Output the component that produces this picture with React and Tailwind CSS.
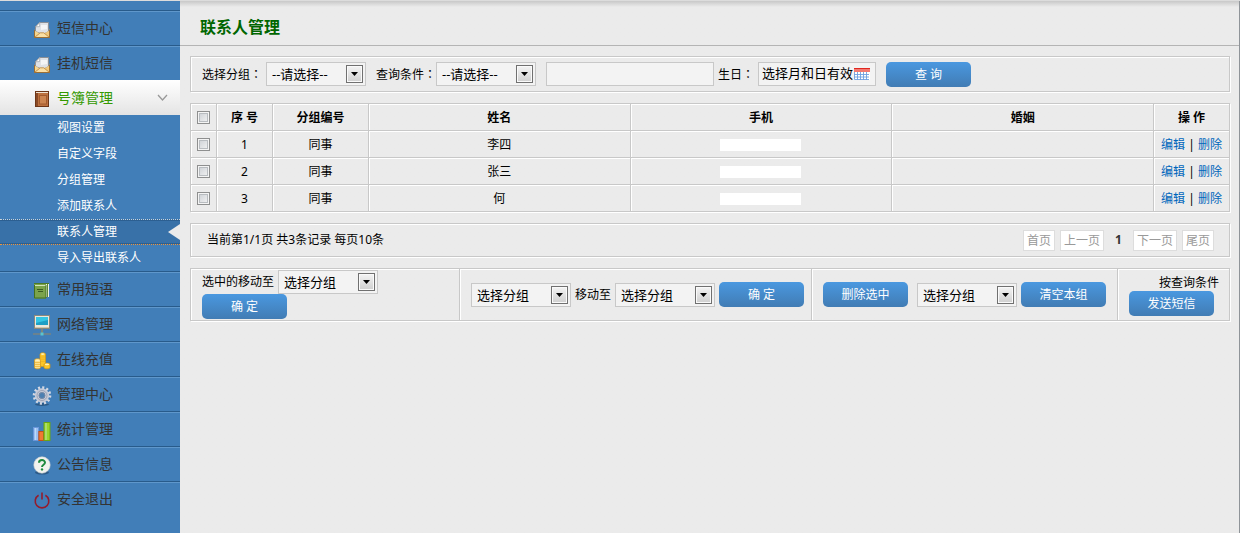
import React, { useState } from 'react';

const MailIcon = () => (
  <svg width="18" height="18" viewBox="0 0 18 18">
    <path d="M1.5 9 L3 7 H16 L16.5 9 V16 H1.5 Z" fill="#d9a552" />
    <path d="M6.5 1.5 H15.5 V10.5 L10 13.5 L2.5 10.5 V5.5 Z" fill="#dfe2e6" stroke="#8a8f96" />
    <path d="M6.8 1.6 L6.6 5.6 L2.8 5.8 Z" fill="#fff" stroke="#9aa0a6" strokeWidth="0.7" />
    <path d="M8 4 H14 V8 L8 9 Z" fill="#f4f5f6" />
    <path d="M1.3 9.5 L7 12.5 L1.3 16.5 Z" fill="#f5d792" />
    <path d="M16.7 9.5 L11 12.5 L16.7 16.5 Z" fill="#f0c97c" />
    <path d="M1.5 16.5 L7.2 11.8 H10.8 L16.5 16.5 Z" fill="#f9dfa4" stroke="#b98238" strokeWidth="0.8" />
    <path d="M1.5 9 V16.5 H16.5 V9" fill="none" stroke="#9b6f35" />
  </svg>
);

const BookIcon = () => (
  <svg width="18" height="18" viewBox="0 0 18 18">
    <rect x="2.5" y="1.5" width="13" height="15" fill="#bd713f" stroke="#6d3517" />
    <rect x="3" y="2" width="2" height="14" fill="#8a4a26" />
    <path d="M3 2.5 H15" stroke="#efe2d2" />
    <rect x="6.5" y="5.5" width="7" height="8.5" fill="#cc8450" stroke="#a25a2e" />
  </svg>
);

const PhraseIcon = () => (
  <svg width="18" height="18" viewBox="0 0 18 18">
    <rect x="3" y="1" width="13" height="14" fill="#eef4e4" />
    <path d="M1 1.5 H16" stroke="#4d7a26" />
    <path d="M14.5 2 V15" stroke="#5d8a34" />
    <rect x="1" y="2" width="12" height="14.5" fill="#7ba44b" />
    <path d="M1 3.5 H13" stroke="#d3e4bb" />
    <path d="M1.5 3 V16 H13 V3" fill="none" stroke="#44701f" />
    <path d="M4 7.5 H10 M5 9.5 H10" stroke="#3b5c21" />
  </svg>
);

const NetworkIcon = () => (
  <svg width="18" height="21" viewBox="0 0 18 21">
    <rect x="1.5" y="0.5" width="15" height="13" fill="#ece8dc" stroke="#8c887c" />
    <rect x="3" y="2" width="12" height="8" fill="#1f9fc4" />
    <path d="M3 2 H15 V5 L3 8 Z" fill="#34c6e4" />
    <path d="M2 12.5 H16" stroke="#d0c6a8" />
    <path d="M9 14 V18" stroke="#7d857d" strokeWidth="2" />
    <path d="M0 19 H18" stroke="#7d857d" strokeWidth="1.4" />
    <rect x="7.5" y="17.5" width="3" height="3" fill="#59c4cf" />
  </svg>
);

const CoinsIcon = () => (
  <svg width="18" height="18" viewBox="0 0 18 18">
    <g fill="#fbc62a" stroke="#d9960e" strokeWidth="0.7">
      <path d="M7 2.2 C7 0.4 12.5 0.4 12.5 2.2 V13 C12.5 15 7 15 7 13 Z" />
      <path d="M1.5 8.2 C1.5 6.4 7.5 6.4 7.5 8.2 V15.5 C7.5 17.3 1.5 17.3 1.5 15.5 Z" fill="#fde08a" />
      <path d="M11 12.5 C11 10.8 17 10.8 17 12.5 V15.5 C17 17.3 11 17.3 11 15.5 Z" />
    </g>
    <g fill="#fff3bd">
      <ellipse cx="9.7" cy="2.1" rx="2" ry="0.8" />
      <ellipse cx="4.5" cy="8.2" rx="2.2" ry="0.8" />
      <ellipse cx="14" cy="12.4" rx="2.2" ry="0.8" />
    </g>
    <path d="M2 10.5 H7 M2 12.5 H7 M2 14.5 H7 M7.5 5 H12 M7.5 7.2 H12 M8 9.4 H12" stroke="#e8a91c" strokeWidth="0.6" />
  </svg>
);

const GearIcon = () => (
  <svg width="20" height="20" viewBox="0 0 20 20">
    <ellipse cx="10" cy="18.5" rx="7" ry="1.4" fill="#2c5a87" />
    <circle cx="10" cy="9.5" r="7.8" fill="none" stroke="#d5d9e4" strokeWidth="3" strokeDasharray="2 2.08" />
    <circle cx="10" cy="9.5" r="5.2" fill="none" stroke="#c5cad8" strokeWidth="4" />
    <circle cx="10" cy="9.5" r="5" fill="none" stroke="#9299ad" strokeWidth="0.8" />
    <circle cx="10" cy="9.5" r="3" fill="#4b7fb2" stroke="#858ca0" strokeWidth="0.8" />
  </svg>
);

const ChartIcon = () => (
  <svg width="18" height="20" viewBox="0 0 18 20">
    <rect x="0.5" y="6.5" width="5" height="13" fill="#9cc0f2" stroke="#6a97da" />
    <rect x="5.9" y="10.5" width="4.6" height="9" fill="#ef7a33" stroke="#c4511a" />
    <rect x="11" y="1.5" width="6" height="18" fill="#9ad62c" stroke="#6aa514" />
    <path d="M2.5 7 V19 M13 2 V19" stroke="#d3ecff" strokeOpacity="0.6" />
  </svg>
);

const HelpIcon = () => (
  <svg width="18" height="19" viewBox="0 0 18 19">
    <ellipse cx="9" cy="16.5" rx="7" ry="2" fill="#2c5a87" />
    <circle cx="9" cy="9" r="8.2" fill="#f1f2ee" stroke="#d0d4d0" strokeWidth="0.6" />
    <path d="M6 6.8 C6 3.2 12 3.2 12 6.6 C12 8.8 9 8.8 9 11" fill="none" stroke="#1f8a3f" strokeWidth="2" />
    <circle cx="9" cy="13.4" r="1.2" fill="#1f8a3f" />
  </svg>
);

const PowerIcon = () => (
  <svg width="18" height="18" viewBox="0 0 18 18">
    <path d="M5.6 3.2 A6.8 6.8 0 1 0 12.4 3.2" fill="none" stroke="#951c2c" strokeWidth="1.6" />
    <path d="M9 0.5 V7.5" stroke="#951c2c" strokeWidth="1.6" />
  </svg>
);

const CalendarIcon = () => (
  <svg width="16" height="12" viewBox="0 0 16 12">
    <rect width="16" height="11" y="1" fill="#fff" />
    <rect width="16" height="4" fill="#f27a72" />
    <path d="M0 0.5 H16" stroke="#e0271f" />
    <path d="M0.5 4 V11.5 H15 M3.5 4 V12 M6.5 4 V12 M9.5 4 V12 M12.5 4 V12 M0 6.5 H15 M0 9 H15" fill="none" stroke="#6f9fe0" strokeWidth="0.9" />
  </svg>
);

const menu = [
  { name: '短信中心', icon: <MailIcon /> },
  { name: '挂机短信', icon: <MailIcon /> },
  {
    name: '号簿管理',
    icon: <BookIcon />,
    children: ['视图设置', '自定义字段', '分组管理', '添加联系人', '联系人管理', '导入导出联系人'],
  },
  { name: '常用短语', icon: <PhraseIcon /> },
  { name: '网络管理', icon: <NetworkIcon /> },
  { name: '在线充值', icon: <CoinsIcon /> },
  { name: '管理中心', icon: <GearIcon /> },
  { name: '统计管理', icon: <ChartIcon /> },
  { name: '公告信息', icon: <HelpIcon /> },
  { name: '安全退出', icon: <PowerIcon /> },
];

const contacts = [
  { id: 1, group: '同事', name: '李四' },
  { id: 2, group: '同事', name: '张三' },
  { id: 3, group: '同事', name: '何' },
];

const panel = 'border border-[#c8c8c8] shadow-[inset_1px_1px_0_#fff,1px_1px_0_#fff]';
const cell = 'h-[27px] p-0 pt-px border-l border-t border-[#c8c8c8] shadow-[inset_1px_1px_0_#fff]';

// the SC font sets its full-width colon to the left, TC centres it
const Colon = () => <span className="font-['Noto_Sans_CJK_TC',sans-serif]">：</span>;

const Select = ({ label, option }) => (
  <span className="relative inline-block h-6 w-[100px] shrink-0">
    <select
      aria-label={label}
      className="h-6 w-full appearance-none border border-[#c8c8c8] bg-[#f3f3f3] pl-[5px] text-[13px] leading-[22px] text-black"
    >
      <option>{option}</option>
    </select>
    <span className="pointer-events-none absolute right-[3px] top-[3px] flex h-[18px] w-[17px] items-center justify-center border border-[#707070] bg-linear-to-b from-[#f4f4f4] to-[#cfcfcf] shadow-[inset_0_0_0_1px_#fafafa]">
      <svg width="7" height="4" viewBox="0 0 7 4">
        <path d="M0 0 H7 L3.5 4 Z" fill="#000" />
      </svg>
    </span>
  </span>
);

const Button = ({ children }) => (
  <button
    type="button"
    className="h-[25px] w-[85px] shrink-0 rounded-[5px] bg-linear-to-b from-[#4a98e0] to-[#417cb4] text-center text-[12px] leading-[25px] text-white"
  >
    {children}
  </button>
);

const Checkbox = ({ label, checked, onChange }) => (
  <input
    type="checkbox"
    aria-label={label}
    checked={checked}
    onChange={onChange}
    className="mx-auto block size-[13px] appearance-none border border-[#8e8f8f] bg-linear-to-br from-[#c9cdd2] to-[#f6f6f6] shadow-[inset_0_0_0_1px_#f4f4f4,inset_0_0_0_2px_#b8bcc0] checked:bg-[#417eb8]"
  />
);

const Sidebar = () => (
  <aside className="w-[180px] shrink-0 bg-[#417eb8] pt-[9px]">
    <ul>
      {menu.map((item) => (
        <li key={item.name}>
          <a
            href="#"
            className={`flex h-[35px] items-center text-[14px] leading-[20px] ${
              item.children
                ? 'bg-linear-to-b from-white to-[#e4e4e4] text-[#339900]'
                : 'border-t border-[#285b8b] text-[#333] shadow-[inset_0_1px_0_#5f97cb]'
            }`}
          >
            <span className="ml-[31px] flex w-[22px] shrink-0 justify-center pt-[3px]">{item.icon}</span>
            <span className="ml-1 flex-1">{item.name}</span>
            {item.children && (
              <svg className="mr-3" width="11" height="8" viewBox="0 0 11 8">
                <path d="M1 1 L5.5 6 L10 1" fill="none" stroke="#999" strokeWidth="1.3" />
              </svg>
            )}
          </a>
          {item.children && (
            <ul>
              {item.children.map((child) => (
                <li key={child}>
                  <a
                    href="#"
                    className={`flex h-[26px] items-center justify-between pl-[57px] text-[12px] leading-[24px] text-white ${
                      child === '联系人管理'
                        ? 'border-y border-dotted border-t-[#c9d3da] border-b-[#f0953a] bg-[#3871a8] shadow-[inset_0_1px_0_#2c5f91,inset_0_-1px_0_#2c5f91]'
                        : ''
                    }`}
                  >
                    {child}
                    {child === '联系人管理' && (
                      <svg width="12" height="16" viewBox="0 0 12 16">
                        <path d="M12 0 V16 L0 8 Z" fill="#ebebeb" />
                      </svg>
                    )}
                  </a>
                </li>
              ))}
            </ul>
          )}
        </li>
      ))}
    </ul>
  </aside>
);

const Filters = () => (
  <form className={`flex h-9 items-center whitespace-nowrap pl-[11px] ${panel}`}>
    <span className="w-16 shrink-0">选择分组<Colon /></span>
    <Select label="选择分组" option="--请选择--" />
    <span className="ml-[10px] w-[60px] shrink-0">查询条件<Colon /></span>
    <Select label="查询条件" option="--请选择--" />
    <input
      type="text"
      aria-label="查询内容"
      className="ml-[10px] h-6 w-[168px] shrink-0 border border-[#c8c8c8] bg-[#f3f3f3] px-1 text-[13px]"
    />
    <label htmlFor="birthday" className="ml-1 w-10 shrink-0">
      生日<Colon />
    </label>
    <span className="flex h-6 w-[118px] shrink-0 items-center border border-[#c8c8c8] bg-[#f3f3f3] pl-[3px]">
      <input
        id="birthday"
        type="text"
        defaultValue="选择月和日有效"
        className="h-[22px] w-[92px] pb-1 text-[13px] leading-[18px] text-black outline-none"
      />
      <CalendarIcon />
    </span>
    <span className="ml-[10px] flex">
      <Button>查 询</Button>
    </span>
  </form>
);

const ContactTable = () => {
  const [selected, setSelected] = useState([]);
  const allSelected = selected.length === contacts.length;

  const toggle = (id) =>
    setSelected(selected.includes(id) ? selected.filter((s) => s !== id) : [...selected, id]);

  return (
    <table className="w-full table-fixed border-separate border-spacing-0 border-r border-b border-[#c8c8c8] text-center shadow-[1px_1px_0_#fff]">
      <colgroup>
        <col className="w-[26px]" />
        <col className="w-[56px]" />
        <col className="w-[96px]" />
        <col />
        <col />
        <col />
        <col className="w-[76px]" />
      </colgroup>
      <thead>
        <tr>
          <th className={cell}>
            <Checkbox
              label="全选"
              checked={allSelected}
              onChange={() => setSelected(allSelected ? [] : contacts.map((c) => c.id))}
            />
          </th>
          {['序 号', '分组编号', '姓名', '手机', '婚姻', '操 作'].map((title) => (
            <th key={title} className={cell}>{title}</th>
          ))}
        </tr>
      </thead>
      <tbody>
        {contacts.map((c) => (
          <tr key={c.id}>
            <td className={cell}>
              <Checkbox label={c.name} checked={selected.includes(c.id)} onChange={() => toggle(c.id)} />
            </td>
            <td className={cell}>{c.id}</td>
            <td className={cell}>{c.group}</td>
            <td className={cell}>{c.name}</td>
            <td className={cell}>
              <span className="mx-auto block h-3 w-[81px] bg-white" />
            </td>
            <td className={cell} />
            <td className={cell}>
              <a href="#" className="text-[#0066bb]">编辑</a> | <a href="#" className="text-[#0066bb]">删除</a>
            </td>
          </tr>
        ))}
      </tbody>
    </table>
  );
};

const PageLink = ({ children }) => (
  <a href="#" className="h-[21px] border border-[#ddd] bg-white px-[3px] leading-[19px] text-[#999]">
    {children}
  </a>
);

const Pagination = () => (
  <div className={`flex h-[34px] items-center justify-between pl-4 pr-[15px] ${panel}`}>
    <span>当前第1/1页 共3条记录 每页10条</span>
    <nav className="flex items-center gap-[5px]">
      <PageLink>首页</PageLink>
      <PageLink>上一页</PageLink>
      <span className="w-[19px] text-center font-bold text-[#333]">1</span>
      <PageLink>下一页</PageLink>
      <PageLink>尾页</PageLink>
    </nav>
  </div>
);

const Actions = () => (
  <div className={`flex h-[53px] ${panel}`}>
    <div className="flex-1 pl-[11px] pt-px">
      <div className="flex items-center gap-1">
        <span>选中的移动至</span>
        <Select label="选中的移动至" option="选择分组" />
      </div>
      <div className="flex">
        <Button>确 定</Button>
      </div>
    </div>
    <div className="flex w-[352px] items-center border-l border-[#c8c8c8] pl-[11px] shadow-[inset_1px_1px_0_#fff]">
      <Select label="原分组" option="选择分组" />
      <span className="mx-1">移动至</span>
      <Select label="移动至" option="选择分组" />
      <span className="ml-1 flex">
        <Button>确 定</Button>
      </span>
    </div>
    <div className="flex w-[306px] items-center border-l border-[#c8c8c8] pl-[11px] shadow-[inset_1px_1px_0_#fff]">
      <Button>删除选中</Button>
      <span className="ml-[9px] mr-1 flex">
        <Select label="清空分组" option="选择分组" />
      </span>
      <Button>清空本组</Button>
    </div>
    <div className="w-[112px] border-l border-[#c8c8c8] pl-[11px] pr-[10px] pt-[5px] shadow-[inset_1px_1px_0_#fff]">
      <div className="text-right leading-[17px]">按查询条件</div>
      <div className="flex">
        <Button>发送短信</Button>
      </div>
    </div>
  </div>
);

const App = () => (
  <div className="flex min-h-screen flex-col bg-[#ebebeb] font-['Noto_Sans','Noto_Sans_CJK_SC',sans-serif] text-[12px] leading-[18px] text-black">
    <div className="h-px bg-[#dcdcdc]" />
    <div className="flex flex-1">
      <Sidebar />
      <main className="min-w-0 flex-1 border-r border-[#8f9499] bg-linear-to-b from-[#c8c8c8] to-[#ebebeb] to-[6px]">
        <h1 className="h-[45px] border-b border-[#b4b4b4] pl-5 pt-[14px] text-[16px] font-bold leading-6 text-[#006600]">
          联系人管理
        </h1>
        <div className="flex flex-col gap-[11px] py-[10px] pl-[10px] pr-[9px]">
          <Filters />
          <ContactTable />
          <Pagination />
          <Actions />
        </div>
      </main>
    </div>
  </div>
);

export default App;
